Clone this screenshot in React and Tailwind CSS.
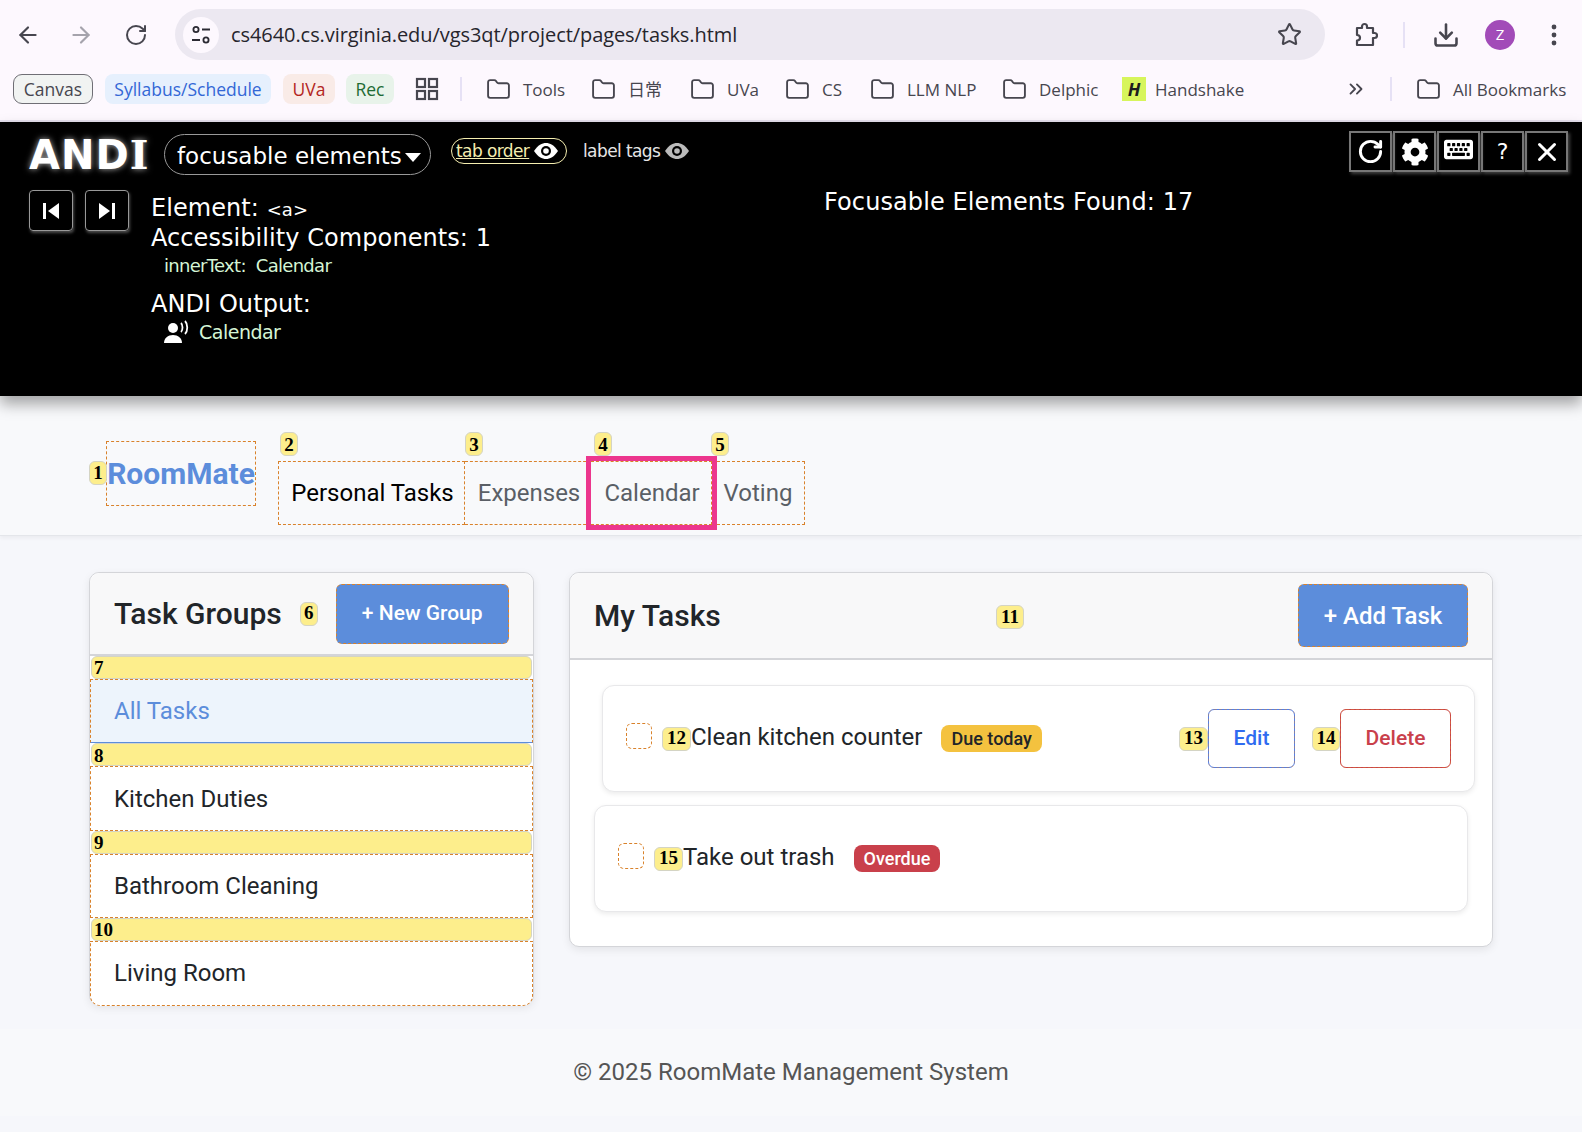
import { ArrowLeft, ArrowRight, RotateCw, Star, Download, Folder, X, ChevronsRight } from 'lucide-react'
import { FaCog, FaKeyboard } from 'react-icons/fa'
import clsx from 'clsx'

const chromeFont = "font-['Open_Sans','Noto_Sans_CJK_SC',sans-serif]"
const andiFont = "font-['DejaVu_Sans',sans-serif]"

// ANDI的序号标签
function Tag({ n, className }) {
  return (
    <span className={clsx("flex h-[24px] shrink-0 items-center justify-center rounded-[6px] border border-[#d4d4c4] bg-[#fdee8c] font-['Liberation_Serif',serif] text-[19px] font-bold text-black", className)}>
      {n}
    </span>
  )
}

function Bookmark({ label, width }) {
  return (
    <div className="flex shrink-0 items-center gap-[12px]" style={{ width }}>
      <Folder size={25} strokeWidth={1.8} className="shrink-0 text-[#47464f]" />
      <span className="whitespace-nowrap text-[17px] leading-none text-[#47464f]">{label}</span>
    </div>
  )
}

function Chip({ children, className }) {
  return <span className={clsx('flex h-[30px] items-center justify-center whitespace-nowrap rounded-[8px] text-[17.500px] font-medium', className)}>{children}</span>
}

function BrowserChrome() {
  return (
    <div className={clsx('h-[122px] border-b-2 border-[#e6e1ee] bg-[#fdf8fe]', chromeFont)}>
      <div className="flex h-[74px] items-start pt-[9px]">
        <div className="flex h-[51px] w-[175px] shrink-0 items-center text-[#47464f]">
          <ArrowLeft size={26} className="ml-[15px]" />
          <ArrowRight size={26} className="ml-[27px] text-[#a5a3ac]" />
          <RotateCw size={24} className="ml-[30px]" />
        </div>
        <div className="flex h-[51px] w-[1150px] shrink-0 items-center rounded-full bg-[#ece8f1]">
          <div className="ml-[8px] flex h-[36px] w-[36px] items-center justify-center rounded-full bg-[#fdf8fe]">
            <svg width="22" height="22" viewBox="0 0 22 22" fill="none" stroke="#2b2a33" strokeWidth="1.8">
              <circle cx="6" cy="5.5" r="2.6" />
              <path d="M12 5.5h8M2 16h8" />
              <circle cx="16" cy="16" r="2.6" />
            </svg>
          </div>
          <span className="ml-[12px] text-[20px] tracking-[-0.07px] text-[#26252c]">cs4640.cs.virginia.edu/vgs3qt/project/pages/tasks.html</span>
          <Star size={25} strokeWidth={2} className="ml-auto mr-[23px] text-[#47464f]" />
        </div>
        <div className="flex h-[51px] flex-1 items-center text-[#47464f]">
          <svg width="26" height="26" viewBox="0 0 26 26" fill="none" stroke="currentColor" strokeWidth="2.2" className="ml-[27px]">
            <path d="M5 6h5V4.5a2.5 2.5 0 0 1 5 0V6h6v5h1.5a2.5 2.5 0 0 1 0 5H21v7H5v-4.5c2 0 3-1.2 3-2.700S7 13 5 13z" strokeLinejoin="round" />
          </svg>
          <span className="ml-[25px] h-[26px] w-[2px] bg-[#e6e1f5]" />
          <Download size={28} strokeWidth={2.2} className="ml-[27px]" />
          <span className="ml-[25px] flex h-[30px] w-[30px] items-center justify-center rounded-full bg-[#a24bb8] text-[15px] text-white">Z</span>
          <svg width="6" height="24" viewBox="0 0 6 24" fill="currentColor" className="ml-[36px]">
            <circle cx="3" cy="4" r="2.400" />
            <circle cx="3" cy="12" r="2.400" />
            <circle cx="3" cy="20" r="2.400" />
          </svg>
        </div>
      </div>
      <div className="flex h-[30px] items-center pl-[13px]">
        <Chip className="w-[80px] rounded-[9px] border border-[#6f6e75] bg-[#f1f3f2] font-normal text-[#47464f]">Canvas</Chip>
        <Chip className="ml-[12px] w-[166px] bg-[#e6f0fd] text-[#3367d6]">Syllabus/Schedule</Chip>
        <Chip className="ml-[12px] w-[52px] bg-[#f9ebe7] text-[#b3261e]">UVa</Chip>
        <Chip className="ml-[11px] w-[48px] bg-[#e8f3ea] text-[#1e6b34]">Rec</Chip>
        <svg width="24" height="24" viewBox="0 0 24 24" fill="none" stroke="#47464f" strokeWidth="2.2" className="ml-[21px]">
          <rect x="2" y="2" width="8" height="8" />
          <rect x="14" y="2" width="8" height="8" />
          <rect x="2" y="14" width="8" height="8" />
          <rect x="14" y="14" width="8" height="8" />
        </svg>
        <span className="ml-[21px] mr-[24px] h-[24px] w-[2px] bg-[#e6e1f5]" />
        <Bookmark label="Tools" width={105} />
        <Bookmark label="日常" width={99} />
        <Bookmark label="UVa" width={95} />
        <Bookmark label="CS" width={85} />
        <Bookmark label="LLM NLP" width={132} />
        <Bookmark label="Delphic" width={120} />
        <div className="flex w-[223px] shrink-0 items-center gap-[9px]">
          <span className="flex h-[24px] w-[24px] items-center justify-center bg-[#d7f55c] text-[18px] font-bold italic leading-none text-[#1d1d1d]">H</span>
          <span className="text-[17px] leading-none text-[#47464f]">Handshake</span>
        </div>
        <ChevronsRight size={22} className="text-[#47464f]" />
        <span className="ml-[23px] mr-[24px] h-[24px] w-[2px] bg-[#e6e1f5]" />
        <Bookmark label="All Bookmarks" width={150} />
      </div>
    </div>
  )
}

function SkipIcon({ flip }) {
  return (
    <svg width="20" height="20" viewBox="0 0 20 20" fill="white" className={flip ? 'rotate-180' : ''}>
      <rect x="2" y="2" width="3" height="16" />
      <path d="M18 2v16L7 10z" />
    </svg>
  )
}

function EyeIcon({ className }) {
  return (
    <svg width="26" height="18" viewBox="0 0 26 18" className={className}>
      <path d="M1 9C5 3 9 1 13 1s8 2 12 8c-4 6-8 8-12 8S5 15 1 9z" fill="currentColor" />
      <circle cx="13" cy="9" r="5" fill="black" />
      <circle cx="13" cy="9" r="2.800" fill="currentColor" />
    </svg>
  )
}

function ToolButton({ children }) {
  return (
    <div className="flex h-[41px] w-[43px] items-center justify-center border-2 border-[#777] text-white shadow-[2px_2px_3px_rgba(255,255,255,0.25)]">
      {children}
    </div>
  )
}

function AndiPanel() {
  return (
    <div className={clsx('relative z-10 h-[274px] bg-black text-white shadow-[0_8px_14px_rgba(0,0,0,0.35)]', andiFont)}>
      <div className="flex items-start pt-[9px]">
        <span className="ml-[29px] mt-[7px] w-[120px] whitespace-nowrap text-[40px] font-bold leading-[34px] tracking-[1px] [text-shadow:0_0_6px_rgba(255,255,255,0.7)]">
          AND<span className="font-['DejaVu_Serif',serif]">I</span>
        </span>
        <div className="ml-[15px] mt-[3px] flex h-[41px] w-[267px] items-center whitespace-nowrap rounded-full border border-[#999] pl-[12px] pt-[4px] text-[23px] leading-none">
          focusable elements
          <span className="ml-[3px] mt-[2px] h-0 w-0 border-x-[8px] border-t-[9px] border-x-transparent border-t-white" />
        </div>
        <div className="ml-[20px] mt-[7px] flex h-[26px] w-[116px] items-center whitespace-nowrap rounded-full border border-[#f5eeb0] pl-[4px] text-[17px] tracking-[-0.6px] text-[#f5eeb0]">
          <span className="relative top-[1px] underline">tab order</span>
          <EyeIcon className="ml-[4px] text-white" />
        </div>
        <div className="ml-[16px] mt-[7px] flex h-[26px] items-center whitespace-nowrap text-[17px] tracking-[-0.6px] text-[#e6e6e6]">
          <span className="relative top-[1px]">label tags</span>
          <EyeIcon className="ml-[4px] text-[#bbb]" />
        </div>
        <div className="ml-auto mr-[14px] flex gap-[1px]">
          <ToolButton><RotateCw size={27} strokeWidth={2.600} /></ToolButton>
          <ToolButton><FaCog size={28} /></ToolButton>
          <ToolButton><FaKeyboard size={29} className="-mt-[4px]" /></ToolButton>
          <ToolButton><span className="text-[22px]">?</span></ToolButton>
          <ToolButton><X size={30} strokeWidth={2.400} /></ToolButton>
        </div>
      </div>
      <div className="flex">
        <div className="ml-[29px] mt-[15px] flex gap-[12px]">
          <div className="flex h-[41px] w-[44px] items-center justify-center rounded-[4px] border border-[#999] shadow-[1px_2px_3px_rgba(255,255,255,0.3)]"><SkipIcon /></div>
          <div className="flex h-[41px] w-[44px] items-center justify-center rounded-[4px] border border-[#999] shadow-[1px_2px_3px_rgba(255,255,255,0.3)]"><SkipIcon flip /></div>
        </div>
        <div className="ml-[22px] pt-[18px]">
          <div className="h-[30px] text-[24px] leading-[30px] tracking-[0.07px]">Element: <span className="text-[18px]">&lt;a&gt;</span></div>
          <div className="h-[30px] text-[24px] leading-[30px] tracking-[0.07px]">Accessibility Components: 1</div>
          <div className="ml-[13px] h-[26px] text-[18px] leading-[26px] tracking-[-0.7px] text-[#d5f5d5] [word-spacing:5px]">innerText: Calendar</div>
          <div className="mt-[10px] h-[30px] text-[24px] leading-[30px] tracking-[0.07px]">ANDI Output:</div>
          <div className="-mt-px ml-[13px] flex h-[28px] items-center gap-[8px] text-[19px] tracking-[-0.5px] text-[#d5f5d5]">
            <svg width="27" height="24" viewBox="0 0 27 24" fill="white">
              <circle cx="9" cy="8" r="5" />
              <path d="M0 23c0-5 4-8 9-8s9 3 9 8z" />
              <path d="M17 3c2 2 2 7 0 9M21 1c3 3 3 10 0 13" fill="none" stroke="white" strokeWidth="1.800" />
            </svg>
            Calendar
          </div>
        </div>
        <div className="absolute left-[824px] top-[65px] text-[24px] leading-[30px] tracking-[0.1px]">Focusable Elements Found: 17</div>
      </div>
    </div>
  )
}

function NavLink({ n, label, className, tagClass }) {
  return (
    <a className={clsx('relative flex h-[64px] items-center justify-center border border-dashed border-[#d9822b] text-[24px] leading-none text-[#5a5f66]', className)}>
      <Tag n={n} className={clsx('absolute top-[-30px] h-[23px] w-[18px]', tagClass)} />
      {label}
    </a>
  )
}

function PageNav() {
  return (
    <div className="relative flex h-[140px] items-start border-b border-[#e4e6ea] bg-[#f8f9fb] pl-[89px] pt-[45px] shadow-[0_2px_4px_rgba(0,0,0,0.05)]">
      <Tag n="1" className="z-10 mt-[20px] h-[24px] w-[18px]" />
      <div className="-ml-px flex h-[65px] w-[150px] items-start justify-center border border-dashed border-[#d9822b] pt-[17px] text-[30px] font-bold leading-none text-[#5c8ddb]">
        RoomMate
      </div>
      <div className="ml-[22px] mt-[20px] flex">
        <NavLink n="2" label="Personal Tasks" className="w-[187px] pl-[2px] text-black" tagClass="left-[1px]" />
        <NavLink n="3" label="Expenses" className="w-[126px] border-l-0 pl-[3px]" tagClass="left-[0px]" />
        <NavLink n="4" label="Calendar" className="z-10 w-[121px] border-l-0 pl-[2px] outline-[5px] outline-[#ec368d]" tagClass="left-[3px]" />
        <NavLink n="5" label="Voting" className="w-[93px] border-l-0" tagClass="left-[-1px]" />
      </div>
    </div>
  )
}

function GroupRow({ n, label, active, last }) {
  return (
    <>
      <div className="mx-[1px] flex h-[23px] items-center rounded-[6px] border border-[#d4d4c4] bg-[#fdee8c] pl-[2px] pt-[2px] font-['Liberation_Serif',serif] text-[19px] font-bold text-black">{n}</div>
      <div
        className={clsx(
          'flex h-[64.400px] items-center border border-dashed border-[#d9822b] pl-[23px] text-[24px]',
          active ? 'border-b-[#5c8ddb] bg-[#edf4fc] text-[#5c8ddb] [border-bottom-style:solid]' : 'bg-white text-[#212529]',
          last && 'rounded-b-[10px]',
        )}
      >
        {label}
      </div>
    </>
  )
}

function TaskGroups() {
  return (
    <div className="h-[433px] w-[445px] shrink-0 rounded-[10px] border border-[#d4d5d9] bg-white shadow-[0_3px_8px_rgba(0,0,0,0.08)]">
      <div className="flex h-[83px] items-center rounded-t-[10px] border-b-2 border-[#d4d5d9] bg-[#f8f8f9] pl-[24px]">
        <span className="text-[30px] font-medium leading-none text-[#212529]">Task Groups</span>
        <Tag n="6" className="ml-[18px] h-[24px] w-[18px]" />
        <button className="ml-[18px] flex h-[60px] w-[173px] items-center justify-center rounded-[6px] border border-dashed border-[#d9822b] bg-[#5c8ddb] pt-[1px] text-[21px] font-medium text-white">
          + New Group
        </button>
      </div>
      <GroupRow n="7" label="All Tasks" active />
      <GroupRow n="8" label="Kitchen Duties" />
      <GroupRow n="9" label="Bathroom Cleaning" />
      <GroupRow n="10" label="Living Room" last />
    </div>
  )
}

function Pill({ className, children }) {
  return <span className={clsx('flex h-[27px] items-center rounded-[8px] px-[10px] text-[18px] font-medium leading-none', className)}>{children}</span>
}

function TaskCheck() {
  return <span className="mb-[5px] h-[26px] w-[26px] shrink-0 rounded-[6px] border border-dashed border-[#d9822b] bg-white" />
}

function MyTasks() {
  return (
    <div className="h-[375px] flex-1 rounded-[10px] border border-[#d4d5d9] bg-white shadow-[0_3px_8px_rgba(0,0,0,0.08)]">
      <div className="relative flex h-[87px] items-center rounded-t-[10px] border-b-2 border-[#d4d5d9] bg-[#f8f8f9] pl-[24px]">
        <span className="text-[30px] font-medium leading-none text-[#212529]">My Tasks</span>
        <Tag n="11" className="absolute left-[426px] top-[32px] w-[28px]" />
        <button className="ml-auto mr-[24px] flex h-[63px] w-[170px] items-center justify-center rounded-[6px] border border-dashed border-[#d9822b] bg-[#5c8ddb] text-[24px] font-medium text-white">
          + Add Task
        </button>
      </div>
      <div className="flex flex-col gap-[13px] px-[24px] pt-[25px]">
        <div className="ml-[8px] -mr-[7px] flex h-[107px] items-center rounded-[12px] border border-[#e8e8ea] bg-white pl-[23px] pr-[23px] shadow-[0_2px_5px_rgba(0,0,0,0.08)]">
          <TaskCheck />
          <Tag n="12" className="ml-[10px] w-[29px]" />
          <span className="mb-[3px] text-[24px] leading-none text-[#212529]">Clean kitchen counter</span>
          <Pill className="ml-[19px] bg-[#f4c23f] text-[#212529]">Due today</Pill>
          <Tag n="13" className="ml-auto w-[29px]" />
          <button className="flex h-[59px] w-[87px] items-center justify-center rounded-[6px] border border-[#4d7ff0] bg-white text-[21px] font-medium text-[#2f6bf0] outline-1 -outline-offset-1 outline-dashed outline-[#d9822b]/40">Edit</button>
          <Tag n="14" className="ml-[17px] w-[28px]" />
          <button className="flex h-[59px] w-[111px] items-center justify-center rounded-[6px] border border-[#c9404b] bg-white text-[21px] font-medium text-[#c9404b] outline-1 -outline-offset-1 outline-dashed outline-[#d9822b]/40">Delete</button>
        </div>
        <div className="flex h-[107px] items-center rounded-[12px] border border-[#e8e8ea] bg-white pl-[23px] shadow-[0_2px_5px_rgba(0,0,0,0.08)]">
          <TaskCheck />
          <Tag n="15" className="ml-[10px] w-[29px]" />
          <span className="mb-[3px] text-[24px] leading-none text-[#212529]">Take out trash</span>
          <Pill className="ml-[19px] bg-[#c9404b] text-white">Overdue</Pill>
        </div>
      </div>
    </div>
  )
}

export default function App() {
  return (
    <div className="flex min-h-[1132px] flex-col overflow-hidden bg-[#f6f7fb] font-['Roboto',sans-serif]">
      <BrowserChrome />
      <AndiPanel />
      <PageNav />
      <div className="flex items-start gap-[35px] pl-[89px] pr-[89px] pt-[36px]">
        <TaskGroups />
        <MyTasks />
      </div>
      <div className="mt-[24px] flex h-[87px] items-center justify-center bg-[#f8f9fb] pb-[2px] text-[24px] leading-[30px] text-[#555]">© 2025 RoomMate Management System</div>
    </div>
  )
}
